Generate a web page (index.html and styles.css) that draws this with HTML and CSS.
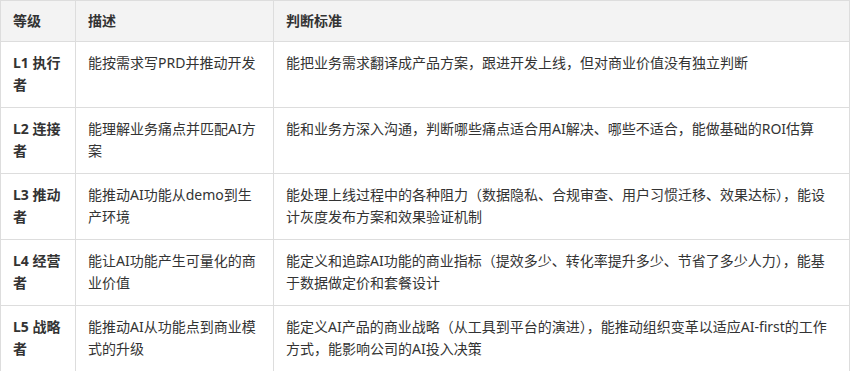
FILE: index.html
```html
<!DOCTYPE html>
<html lang="zh-CN">
<head>
<meta charset="utf-8">
<title>AI产品经理等级</title>
<link rel="stylesheet" href="styles.css">
</head>
<body>
<table class="levels">
  <colgroup>
    <col class="col-level">
    <col class="col-desc">
    <col class="col-crit">
  </colgroup>
  <thead>
    <tr>
      <th>等级</th>
      <th>描述</th>
      <th>判断标准</th>
    </tr>
  </thead>
  <tbody>
    <tr>
      <td class="lvl">L1 执行者</td>
      <td>能按需求写PRD并推动开发</td>
      <td>能把业务需求翻译成产品方案，跟进开发上线，但对商业价值没有独立判断</td>
    </tr>
    <tr>
      <td class="lvl">L2 连接者</td>
      <td>能理解业务痛点并匹配AI方案</td>
      <td>能和业务方深入沟通，判断哪些痛点适合用AI解决、哪些不适合，能做基础的ROI估算</td>
    </tr>
    <tr>
      <td class="lvl">L3 推动者</td>
      <td>能推动AI功能从demo到生产环境</td>
      <td>能处理上线过程中的各种阻力（数据隐私、合规审查、用户习惯迁移、效果达标），能设计灰度发布方案和效果验证机制</td>
    </tr>
    <tr>
      <td class="lvl">L4 经营者</td>
      <td>能让AI功能产生可量化的商业价值</td>
      <td>能定义和追踪AI功能的商业指标（提效多少、转化率提升多少、节省了多少人力），能基于数据做定价和套餐设计</td>
    </tr>
    <tr>
      <td class="lvl">L5 战略者</td>
      <td>能推动AI从功能点到商业模式的升级</td>
      <td>能定义AI产品的商业战略（从工具到平台的演进），能推动组织变革以适应AI-first的工作方式，能影响公司的AI投入决策</td>
    </tr>
  </tbody>
</table>
</body>
</html>
```
FILE: styles.css
```css
html, body {
  margin: 0;
  padding: 0;
  background: #ffffff;
}

body {
  font-family: "Noto Sans", "Noto Sans CJK SC", sans-serif;
  font-size: 14px;
  line-height: 22px;
  color: #333333;
}

.levels {
  width: 850px;
  border-collapse: collapse;
  table-layout: fixed;
}

.col-level { width: 75px; }
.col-desc { width: 198px; }

.levels th,
.levels td {
  border: 1px solid #dddddd;
  text-align: left;
  vertical-align: top;
  word-break: break-all;
}

.levels th {
  background: #f3f3f3;
  font-weight: bold;
  padding: 9px 12px 9px 12px;
}

.levels td {
  padding: 10px 12px 11px 12px;
}

.levels td.lvl {
  font-weight: bold;
}
```
